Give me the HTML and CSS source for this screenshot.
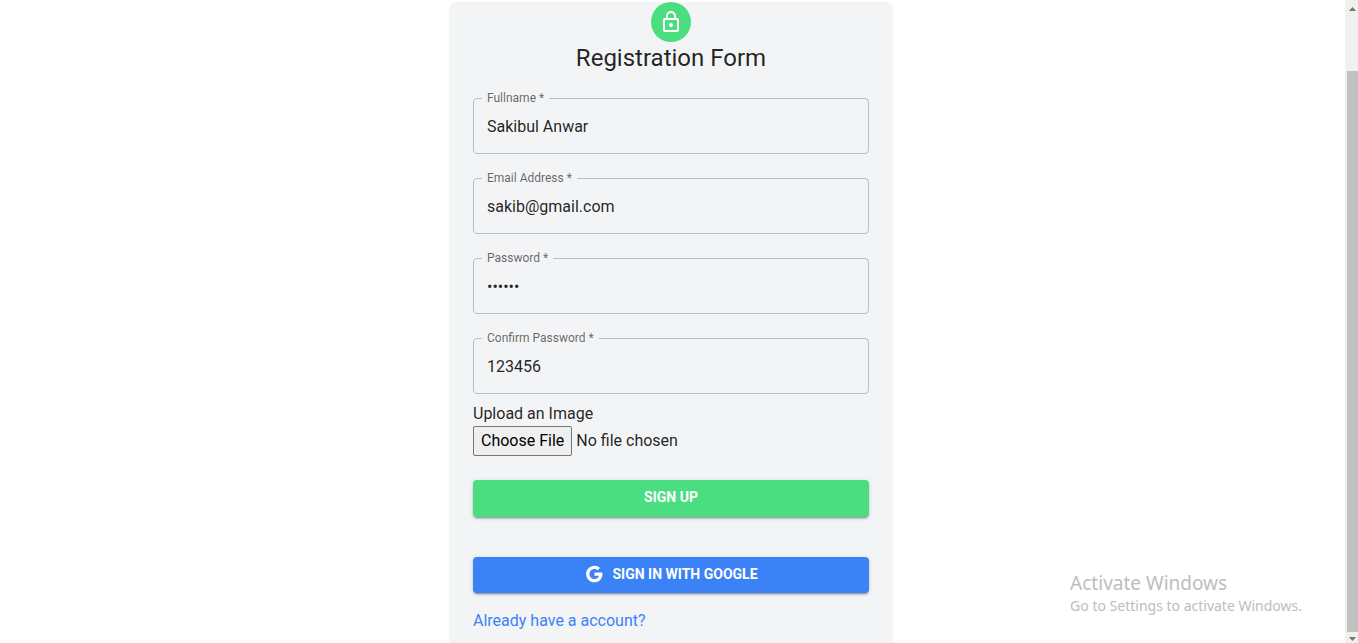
FILE: index.html
```html
<!DOCTYPE html>
<html lang="en">
<head>
<meta charset="utf-8">
<title>Registration Form</title>
<link rel="stylesheet" href="styles.css">
</head>
<body class="page">
  <main class="content">
    <section class="card">
      <span class="avatar">
        <svg class="avatar-icon" viewBox="0 0 24 24" aria-hidden="true"><path d="M12 17c1.1 0 2-.9 2-2s-.9-2-2-2-2 .9-2 2 .9 2 2 2zm6-9h-1V6c0-2.76-2.24-5-5-5S7 3.24 7 6v2H6c-1.1 0-2 .9-2 2v10c0 1.100.9 2 2 2h12c1.100 0 2-.9 2-2V10c0-1.100-.9-2-2-2zM8.900 6c0-1.710 1.390-3.100 3.100-3.100s3.100 1.390 3.100 3.100v2H8.900V6zM18 20H6V10h12v10z"/></svg>
      </span>
      <h1 class="title">Registration Form</h1>
      <form class="form">
        <div class="field">
          <label class="field-label" for="fullname">Fullname *</label>
          <input class="field-input" id="fullname" type="text" value="Sakibul Anwar">
        </div>
        <div class="field">
          <label class="field-label" for="email">Email Address *</label>
          <input class="field-input" id="email" type="email" value="sakib@gmail.com">
        </div>
        <div class="field">
          <label class="field-label" for="password">Password *</label>
          <input class="field-input" id="password" type="password" value="123456">
        </div>
        <div class="field">
          <label class="field-label" for="confirm">Confirm Password *</label>
          <input class="field-input" id="confirm" type="text" value="123456">
        </div>
        <div class="upload">
          <label for="image">Upload an Image</label>
          <input class="file" id="image" type="file">
        </div>
        <button class="button button-green" type="submit">SIGN UP</button>
        <button class="button button-blue" type="button">
          <svg class="button-icon" viewBox="0 0 24 24" aria-hidden="true"><path d="M12.545 10.239v3.821h5.445c-.712 2.315-2.647 3.972-5.445 3.972-3.332 0-6.033-2.701-6.033-6.032s2.701-6.032 6.033-6.032c1.498 0 2.866.549 3.921 1.453l2.814-2.814C17.503 2.988 15.139 2 12.545 2 7.021 2 2.543 6.477 2.543 12s4.478 10 10.002 10c8.396 0 10.249-7.850 9.426-11.748l-9.426-.013z"/></svg>
          SIGN IN WITH GOOGLE
        </button>
      </form>
      <a class="link" href="#">Already have a account?</a>
    </section>
  </main>
  <div class="scrollbar" aria-hidden="true">
    <svg class="arrow" viewBox="0 0 7 4"><path d="M0 4 3.500 0 7 4z"/></svg>
    <div class="thumb"></div>
    <svg class="arrow" viewBox="0 0 7 4"><path d="M0 0h7L3.500 4z"/></svg>
  </div>
  <aside class="watermark">
    <p class="watermark-title">Activate Windows</p>
    <p class="watermark-text">Go to Settings to activate Windows.</p>
  </aside>
</body>
</html>
```
FILE: styles.css
```css
* {
  box-sizing: border-box;
}

.page {
  margin: 0;
  height: 100vh;
  display: flex;
  overflow: hidden;
  background: #fff;
  color: rgba(0, 0, 0, 0.87);
  font: 16px/24px Roboto, sans-serif;
}

.content {
  flex: 1;
  display: flex;
  justify-content: center;
  padding: 2px 3px 0 0;
}

.card {
  width: 100%;
  max-width: 444px;
  padding: 0 24px;
  border-radius: 8px 8px 0 0;
  background: #f3f4f6;
}

.avatar {
  display: flex;
  align-items: center;
  justify-content: center;
  width: 40px;
  height: 40px;
  margin: 0 auto;
  border-radius: 50%;
  background: #4ade80;
}

.avatar-icon {
  width: 24px;
  height: 24px;
  fill: #fff;
}

.title {
  margin: 0 0 24px;
  font-size: 24px;
  font-weight: 400;
  line-height: 32px;
  text-align: center;
}

.form {
  display: flex;
  flex-direction: column;
}

.field {
  position: relative;
  margin-bottom: 24px;
}

.field:nth-of-type(4) {
  margin-bottom: 8px;
}

.field-label {
  position: absolute;
  top: -8px;
  left: 9px;
  padding: 0 5px;
  background: #f3f4f6;
  color: rgba(0, 0, 0, 0.6);
  font-size: 12px;
  line-height: 16px;
}

.field-input {
  display: block;
  width: 100%;
  height: 56px;
  padding: 0 13px;
  border: 1px solid #bbbcbe;
  border-radius: 4px;
  background: transparent;
  color: inherit;
  font: inherit;
}

.upload {
  display: flex;
  flex-direction: column;
  margin-bottom: 24px;
}

.file {
  width: 100%;
  height: 30px;
  color: inherit;
  font: inherit;
}

.file::file-selector-button {
  height: 30px;
  margin-right: 4px;
  padding: 0 7px;
  border: 1px solid #767676;
  border-radius: 2px;
  background: #efefef;
  color: #000;
  font: inherit;
}

.button {
  display: flex;
  align-items: center;
  justify-content: center;
  gap: 8px;
  padding: 5px 16px 8px;
  border: 0;
  border-radius: 4px;
  color: #fff;
  font: 700 14px/24px Roboto, sans-serif;
  box-shadow: 0 3px 1px -2px rgba(0, 0, 0, 0.2), 0 2px 2px rgba(0, 0, 0, 0.14), 0 1px 5px rgba(0, 0, 0, 0.12);
}

.button-green {
  margin-bottom: 40px;
  background: #4ade80;
}

.button-blue {
  margin-bottom: 16px;
  padding: 5px 16px 7px;
  background: #3b82f6;
}

.button-icon {
  width: 20px;
  height: 20px;
  fill: currentColor;
}

.link {
  color: #3b82f6;
  text-decoration: none;
}

.scrollbar {
  display: flex;
  flex-direction: column;
  align-items: center;
  width: 13px;
  padding: 7px 0 2px 2px;
  background: #f0f0f0;
}

.arrow {
  width: 7px;
  height: 4px;
  fill: #85705f;
}

.thumb {
  flex: 1;
  width: 100%;
  margin: 60px 0 5px;
  background: #c1c1c1;
}

.watermark {
  position: absolute;
  right: 56px;
  bottom: 27px;
  color: #bdbdbd;
  font-family: "Noto Sans", sans-serif;
}

.watermark-title {
  margin: 0;
  font-size: 19px;
  line-height: 26px;
}

.watermark-text {
  margin: 0;
  font-size: 14px;
  line-height: 20px;
}
```
